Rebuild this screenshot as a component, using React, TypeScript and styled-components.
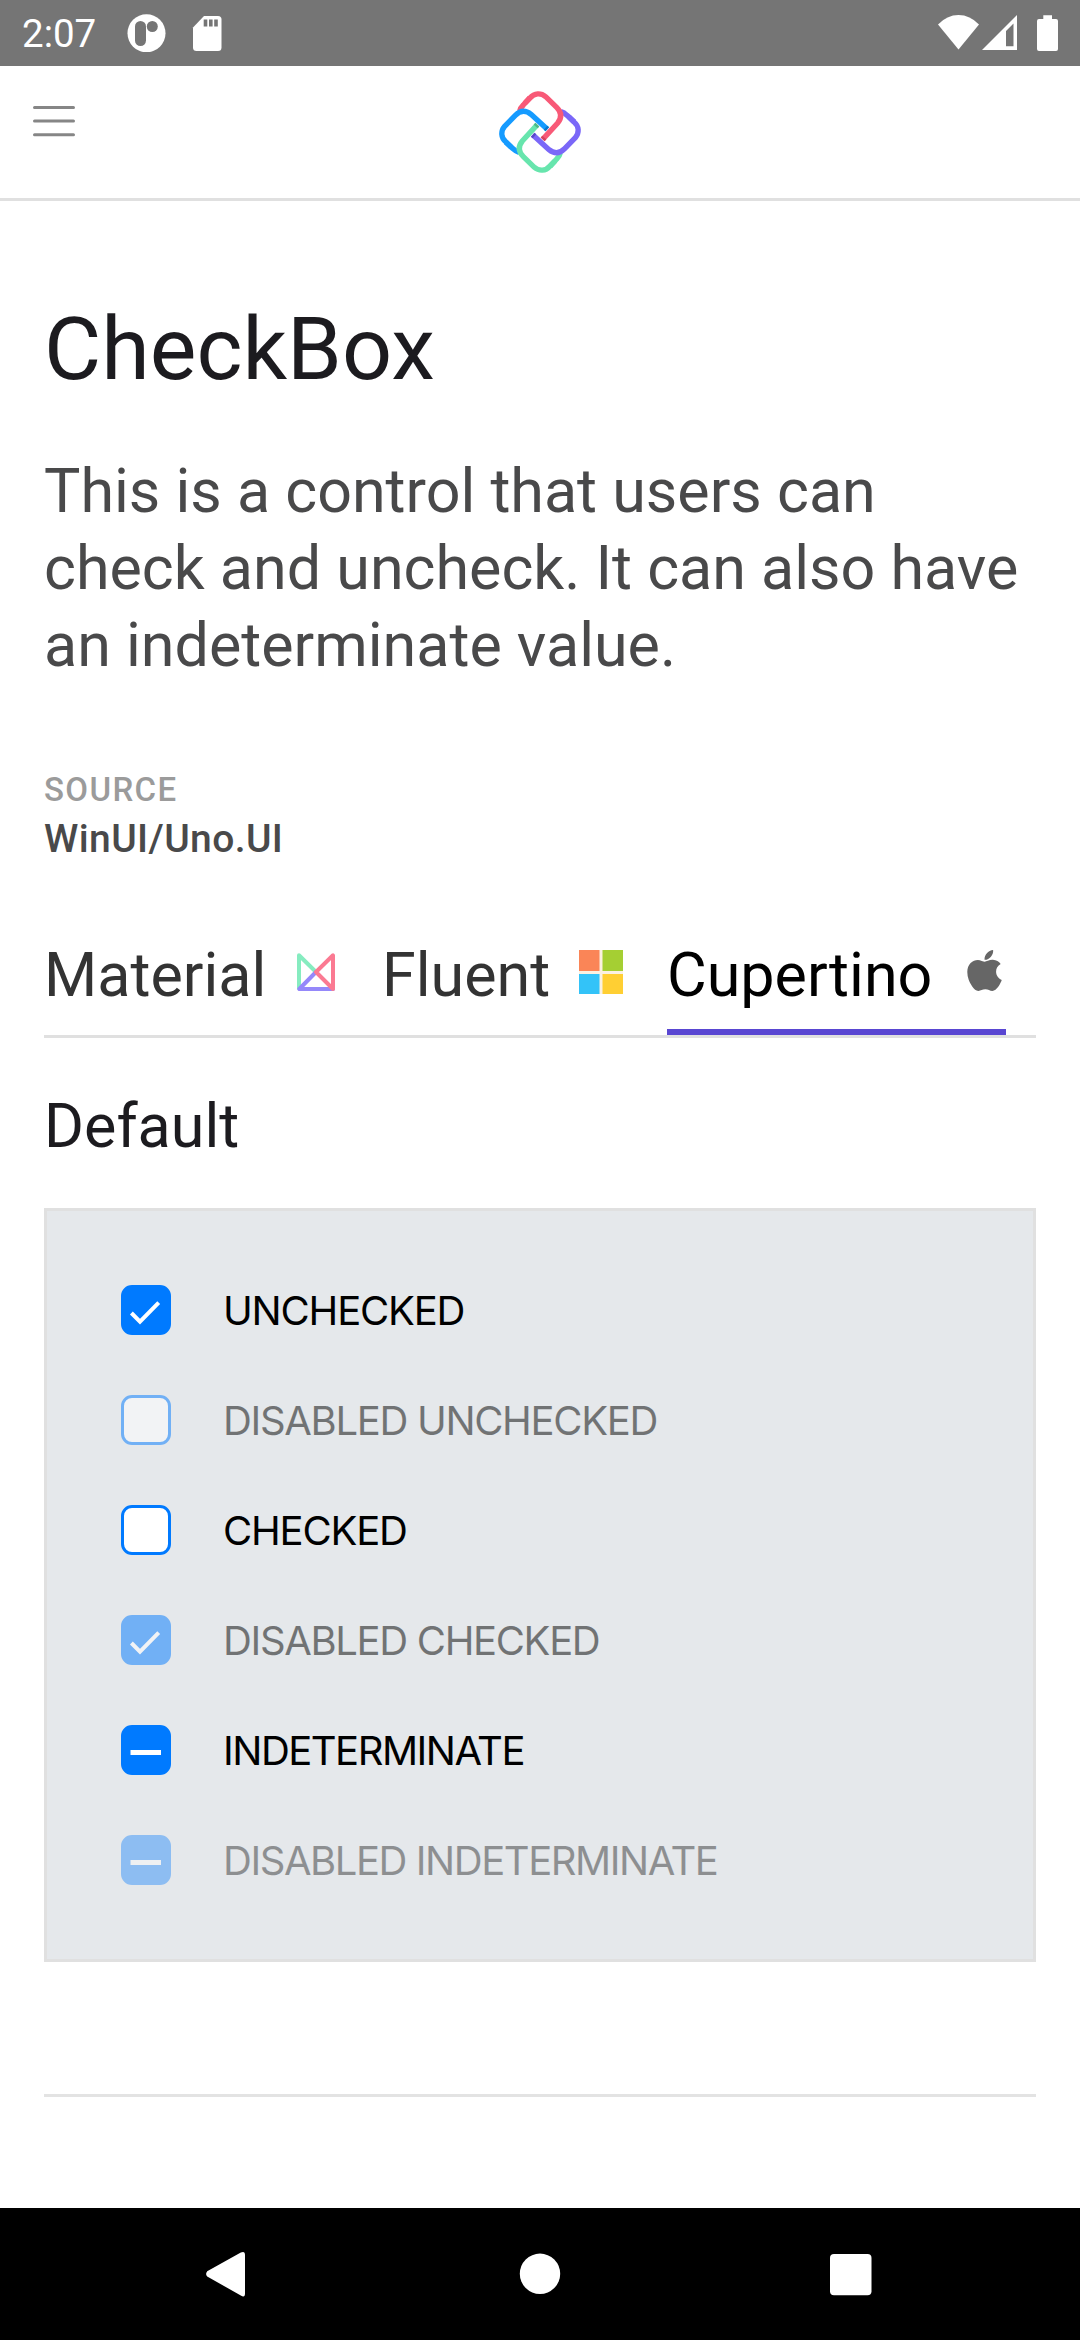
import React from "react";
import styled, { createGlobalStyle } from "styled-components";
import { FaApple } from "react-icons/fa";

const GlobalStyle = createGlobalStyle`
  * { box-sizing: border-box; }
  body { margin: 0; background: #fff; font-family: Roboto, "Liberation Sans", sans-serif; }
`;

const Screen = styled.div`
  width: 1080px;
  height: 2340px;
  display: flex;
  flex-direction: column;
  background: #fff;
  overflow: hidden;
`;

const StatusBar = styled.div`
  height: 66px;
  flex: none;
  display: flex;
  align-items: center;
  justify-content: space-between;
  padding: 0 20px 0 22px;
  background: #757575;
  color: #fff;
`;

const StatusGroup = styled.div`
  display: flex;
  align-items: center;
`;

const Clock = styled.span`
  width: 104px;
  font-size: 38.5px;
  line-height: 46px;
  padding-top: 2px;
`;

const Glyph = styled.svg`
  display: block;
  flex: none;
`;

const Header = styled.header`
  height: 135px;
  flex: none;
  display: grid;
  grid-template-columns: 1fr 90px 1fr;
  padding: 0 33px;
  background: #fff;
  border-bottom: 3px solid #e0e0e0;
`;

const MenuButton = styled.button`
  display: block;
  width: 42px;
  height: 32px;
  margin: 39px 0 0;
  padding: 0;
  border: 0;
  background: none;
`;

const LogoSlot = styled.div`
  padding-top: 20.7px;
`;

const Content = styled.main`
  flex: 1;
  display: flex;
  flex-direction: column;
  padding: 93px 44px 0;
`;

const Title = styled.h1`
  margin: 0;
  font-size: 88px;
  line-height: 110px;
  font-weight: 400;
  color: #1c1b1f;
`;

const Description = styled.p`
  margin: 49px 0 84px;
  font-size: 61px;
  line-height: 77px;
  color: #49494a;
`;

const SourceLabel = styled.div`
  font-size: 33px;
  line-height: 44px;
  font-weight: 500;
  letter-spacing: 1.375px;
  color: #9b9b9b;
`;

const SourceValue = styled.div`
  font-size: 39px;
  line-height: 54px;
  font-weight: 500;
  letter-spacing: 0.4px;
  color: #49494a;
`;

const Tabs = styled.nav`
  display: flex;
  height: 101px;
  margin-top: 71px;
  border-bottom: 3px solid #e0e0e0;
`;

const Tab = styled.div<{ $width: number; $active?: boolean }>`
  display: flex;
  justify-content: space-between;
  width: ${(p) => p.$width}px;
  height: 98px;
  font-size: 61px;
  line-height: 77px;
  color: ${(p) => (p.$active ? "#000" : "#333")};
  border-bottom: 6px solid ${(p) => (p.$active ? "#5946d2" : "transparent")};
`;

const TabIcon = styled.span<{ $right: number; $height?: number }>`
  display: flex;
  align-items: center;
  height: ${(p) => p.$height ?? 44}px;
  margin: 13px ${(p) => p.$right}px 0 0;
  color: #666;
`;

const SectionTitle = styled.h2`
  margin: 50px 0 43px;
  font-size: 61px;
  line-height: 77px;
  font-weight: 400;
  color: #1c1b1f;
`;

const Panel = styled.section`
  padding: 44px 74px;
  background: #e5e8eb;
  border: 3px solid #e0e0e0;
`;

const Row = styled.label<{ $opacity: number }>`
  display: flex;
  align-items: center;
  gap: 52px;
  height: 110px;
  opacity: ${(p) => p.$opacity};
`;

const Box = styled.span<{ $filled: boolean }>`
  display: flex;
  width: 50px;
  height: 50px;
  flex: none;
  align-items: center;
  justify-content: center;
  border: 3px solid #007aff;
  border-radius: 11px;
  background: ${(p) => (p.$filled ? "#007aff" : "#fff")};
`;

const RowText = styled.span<{ $tracking: number }>`
  padding-top: 2px;
  font-family: Inter, "Liberation Sans", sans-serif;
  font-size: 40px;
  line-height: 50px;
  letter-spacing: ${(p) => p.$tracking}px;
  color: #000;
`;

const Divider = styled.hr`
  width: 100%;
  height: 3px;
  margin: 132px 0 0;
  border: 0;
  background: #e3e3e3;
`;

const NavBar = styled.footer`
  height: 132px;
  flex: none;
  display: flex;
  justify-content: space-between;
  padding: 43px 208px 0 206px;
  background: #000;
`;

const LOGO_STROKES = [
  { color: "#f85977", shade: "#d6405f", angle: 0 },
  { color: "#7a67f8", shade: "#5a49c8", angle: 90 },
  { color: "#67e5ad", shade: "#4db887", angle: 180 },
  { color: "#159bff", shade: "#0b77cc", angle: 270 },
];

function UnoLogo() {
  return (
    <Glyph width="90" height="90" viewBox="165 80 270 270" fill="none" strokeWidth="16">
      {LOGO_STROKES.map((s) => (
        <path
          key={s.angle}
          transform={`rotate(${s.angle} 300 215)`}
          stroke={s.color}
          d="M239 152 Q241 143 250 134 L270 112"
        />
      ))}
      {LOGO_STROKES.map((s) => (
        <g key={s.angle} transform={`rotate(${s.angle} 300 215)`}>
          <path
            stroke={s.color}
            d="M254 129 L270 113 C283 97 303 97 317 109 L350 141 C365 156 366 172 353 188 L308 237"
          />
          <path stroke={s.shade} d="M313 231.500 L308 237" />
        </g>
      ))}
    </Glyph>
  );
}

function MaterialMark() {
  return (
    <Glyph width="38" height="38" viewBox="297 953 38 38" fill="none" strokeWidth="4" strokeLinejoin="round" strokeLinecap="round">
      <path stroke="#86ecc0" d="M299 988V955.300L316 972" />
      <path stroke="#9588fa" d="M316 972L299.300 989H333" />
      <path stroke="#fb7a92" d="M316 972L333 955.300V989Z" />
    </Glyph>
  );
}

function WindowsMark() {
  return (
    <Glyph width="44" height="44" viewBox="0 0 44 44">
      <rect width="44" height="44" fill="#fbf1e2" />
      <rect width="20.500" height="21" fill="#fa8557" />
      <rect x="23.500" width="20.500" height="21" fill="#a5cf33" />
      <rect y="24" width="20.500" height="20" fill="#33c3f8" />
      <rect x="23.500" y="24" width="20.500" height="20" fill="#ffcf33" />
    </Glyph>
  );
}

type State = "on" | "off" | "mixed";

interface CheckBoxProps {
  state: State;
  label: string;
  tracking: number;
  opacity?: number;
}

function CheckBox({ state, label, tracking, opacity = 1 }: CheckBoxProps) {
  return (
    <Row $opacity={opacity}>
      <Box $filled={state !== "off"}>
        {state !== "off" && (
          <Glyph width="44" height="44" viewBox="3 3 44 44" fill="none" stroke="#fff">
            {state === "on" ? (
              <path strokeWidth="4" d="M10.400 28L19 36.600L37.700 17.700" />
            ) : (
              <path strokeWidth="5" d="M9.500 27.500H40" />
            )}
          </Glyph>
        )}
      </Box>
      <RowText $tracking={tracking}>{label}</RowText>
    </Row>
  );
}

export default function App() {
  return (
    <>
      <GlobalStyle />
      <Screen>
        <StatusBar>
          <StatusGroup>
            <Clock>2:07</Clock>
            <Glyph width="100" height="38" viewBox="126 14 100 38" fill="#fff">
              <circle cx="146.500" cy="33.300" r="19" />
              <rect x="135" y="21" width="11" height="25" rx="5.500" fill="#757575" />
              <circle cx="152.300" cy="26.500" r="5.500" fill="#757575" />
              <path d="M204 16H218Q221.500 16 221.500 19.500V47.500Q221.500 51 218 51H196.500Q193 51 193 47.500V27.500Z" />
              <path fill="#757575" d="M203.700 19.500h3.600v7h-3.600zM209 19.500h3.600v7H209zM214.200 19.500h3.600v7h-3.600z" />
            </Glyph>
          </StatusGroup>
          <Glyph width="122" height="38" viewBox="938 14 122 38" fill="#fff">
            <path d="M958.500 49.500L938 24.500Q947 15 958.500 15T979 24.500Z" />
            <path fillRule="evenodd" d="M982 50L1017 15V50ZM1006 31V46.300H1013.500V23.500Z" />
            <path d="M1043.300 15.300H1052V19H1056Q1058 19 1058 21V49Q1058 51 1056 51H1039Q1037 51 1037 49V21Q1037 19 1039 19H1043.300Z" />
          </Glyph>
        </StatusBar>
        <Header>
          <MenuButton aria-label="Menu">
            <Glyph width="42" height="32" viewBox="0 0 42 32" stroke="#868686" strokeWidth="3" strokeLinecap="round">
              <path d="M1.500 2.400H40.500M1.500 16H40.500M1.500 29.700H40.500" />
            </Glyph>
          </MenuButton>
          <LogoSlot>
            <UnoLogo />
          </LogoSlot>
        </Header>
        <Content>
          <Title>CheckBox</Title>
          <Description>
            This is a control that users can check and uncheck. It can also have an indeterminate value.
          </Description>
          <SourceLabel>SOURCE</SourceLabel>
          <SourceValue>WinUI/Uno.UI</SourceValue>
          <Tabs>
            <Tab $width={338}>
              Material
              <TabIcon $right={47}>
                <MaterialMark />
              </TabIcon>
            </Tab>
            <Tab $width={285}>
              Fluent
              <TabIcon $right={44}>
                <WindowsMark />
              </TabIcon>
            </Tab>
            <Tab $width={339} $active>
              Cupertino
              <TabIcon $right={1.5} $height={41}>
                <FaApple size={41} viewBox="4 32 376 448" />
              </TabIcon>
            </Tab>
          </Tabs>
          <SectionTitle>Default</SectionTitle>
          <Panel>
            <CheckBox state="on" label="UNCHECKED" tracking={-1.18} />
            <CheckBox state="off" label="DISABLED UNCHECKED" tracking={-1.32} opacity={0.5} />
            <CheckBox state="off" label="CHECKED" tracking={-1.18} />
            <CheckBox state="on" label="DISABLED CHECKED" tracking={-1.34} opacity={0.5} />
            <CheckBox state="mixed" label="INDETERMINATE" tracking={-1.5} />
            <CheckBox state="mixed" label="DISABLED INDETERMINATE" tracking={-1.45} opacity={0.38} />
          </Panel>
          <Divider />
        </Content>
        <NavBar>
          <Glyph width="44" height="46" viewBox="0 0 44 46" fill="#fff">
            <path d="M1.200 20.200L34.800 1.500Q39 -0.500 39 4V42.500Q39 47 34.800 44.500L1.200 25.500Q-1 23 1.200 20.200Z" />
          </Glyph>
          <Glyph width="42" height="46" viewBox="0 0 42 46" fill="#fff">
            <circle cx="21" cy="22.800" r="20.200" />
          </Glyph>
          <Glyph width="42" height="46" viewBox="0 0 42 46" fill="#fff">
            <rect x="0" y="3" width="41.500" height="41.300" rx="4" />
          </Glyph>
        </NavBar>
      </Screen>
    </>
  );
}
